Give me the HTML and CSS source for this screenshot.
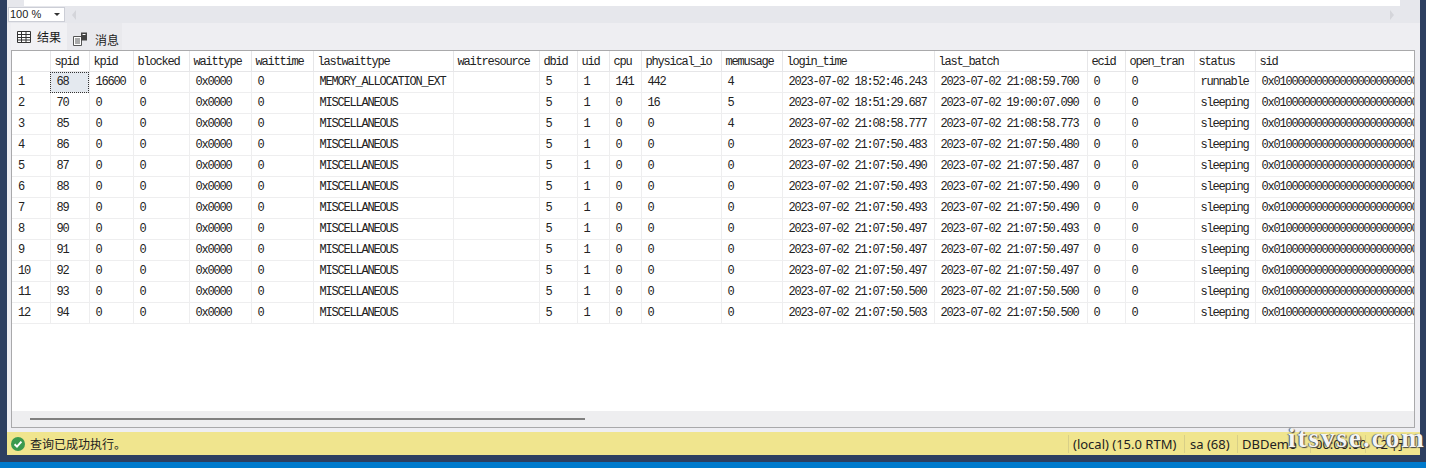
FILE: index.html
```html
<!DOCTYPE html>
<html lang="zh-CN">
<head>
  <meta charset="utf-8"/>
  <link rel="stylesheet" href="styles.css">
  <title>结果</title>
</head>
<body>
  <div class="window">
    <div class="panel">
      <div class="top-strip"><div class="top-white"></div></div>
      <div class="zoom-bar">
        <div class="zoom-select">100 %<span class="zoom-caret"></span></div>
        <span class="arrow-left"></span>
        <span class="arrow-right"></span>
      </div>
      <div class="tabs">
        <div class="tab tab-active">
          <svg width="14" height="12" viewBox="0 0 14 12" class="tab-icon"><path d="M.5.5h13v11H.5zM.5 3.5h13M.5 6.5h13M.5 9h13M4.5 .5v11M9 .5v11" fill="#fff" stroke="#333"/></svg>
          结果
        </div>
        <div class="tab tab-other">
          <svg width="15" height="14" viewBox="0 0 15 14" class="tab-icon"><path d="M.5 4.5h8v9h-8zM2 7h5M2 9h5M2 11h5" fill="#fff" stroke="#555"/><path d="M8 .5h6v8H8z" fill="#444"/><path d="M9.5 2.5h3" stroke="#fff"/></svg>
          消息
        </div>
      </div>
      <div class="grid-box">
        <div class="grid-scroll">
          <table class="grid">
            <colgroup>
              <col width="38"><col width="39"><col width="44"><col width="56"><col width="62"><col width="62"><col width="140"><col width="86"><col width="38"><col width="32"><col width="32"><col width="80"><col width="61"><col width="152"><col width="153"><col width="38"><col width="69"><col width="61"><col width="200">
            </colgroup>
            <thead>
              <tr><th></th><th>spid</th><th>kpid</th><th>blocked</th><th>waittype</th><th>waittime</th><th>lastwaittype</th><th>waitresource</th><th>dbid</th><th>uid</th><th>cpu</th><th>physical_io</th><th>memusage</th><th>login_time</th><th>last_batch</th><th>ecid</th><th>open_tran</th><th>status</th><th>sid</th></tr>
            </thead>
            <tbody>
              <tr><td>1</td><td class="cell-focus">68</td><td>16600</td><td>0</td><td>0x0000</td><td>0</td><td>MEMORY_ALLOCATION_EXT</td><td></td><td>5</td><td>1</td><td>141</td><td>442</td><td>4</td><td>2023-07-02 18:52:46.243</td><td>2023-07-02 21:08:59.700</td><td>0</td><td>0</td><td>runnable</td><td>0x0100000000000000000000000000</td></tr>
              <tr><td>2</td><td>70</td><td>0</td><td>0</td><td>0x0000</td><td>0</td><td>MISCELLANEOUS</td><td></td><td>5</td><td>1</td><td>0</td><td>16</td><td>5</td><td>2023-07-02 18:51:29.687</td><td>2023-07-02 19:00:07.090</td><td>0</td><td>0</td><td>sleeping</td><td>0x0100000000000000000000000000</td></tr>
              <tr><td>3</td><td>85</td><td>0</td><td>0</td><td>0x0000</td><td>0</td><td>MISCELLANEOUS</td><td></td><td>5</td><td>1</td><td>0</td><td>0</td><td>4</td><td>2023-07-02 21:08:58.777</td><td>2023-07-02 21:08:58.773</td><td>0</td><td>0</td><td>sleeping</td><td>0x0100000000000000000000000000</td></tr>
              <tr><td>4</td><td>86</td><td>0</td><td>0</td><td>0x0000</td><td>0</td><td>MISCELLANEOUS</td><td></td><td>5</td><td>1</td><td>0</td><td>0</td><td>0</td><td>2023-07-02 21:07:50.483</td><td>2023-07-02 21:07:50.480</td><td>0</td><td>0</td><td>sleeping</td><td>0x0100000000000000000000000000</td></tr>
              <tr><td>5</td><td>87</td><td>0</td><td>0</td><td>0x0000</td><td>0</td><td>MISCELLANEOUS</td><td></td><td>5</td><td>1</td><td>0</td><td>0</td><td>0</td><td>2023-07-02 21:07:50.490</td><td>2023-07-02 21:07:50.487</td><td>0</td><td>0</td><td>sleeping</td><td>0x0100000000000000000000000000</td></tr>
              <tr><td>6</td><td>88</td><td>0</td><td>0</td><td>0x0000</td><td>0</td><td>MISCELLANEOUS</td><td></td><td>5</td><td>1</td><td>0</td><td>0</td><td>0</td><td>2023-07-02 21:07:50.493</td><td>2023-07-02 21:07:50.490</td><td>0</td><td>0</td><td>sleeping</td><td>0x0100000000000000000000000000</td></tr>
              <tr><td>7</td><td>89</td><td>0</td><td>0</td><td>0x0000</td><td>0</td><td>MISCELLANEOUS</td><td></td><td>5</td><td>1</td><td>0</td><td>0</td><td>0</td><td>2023-07-02 21:07:50.493</td><td>2023-07-02 21:07:50.490</td><td>0</td><td>0</td><td>sleeping</td><td>0x0100000000000000000000000000</td></tr>
              <tr><td>8</td><td>90</td><td>0</td><td>0</td><td>0x0000</td><td>0</td><td>MISCELLANEOUS</td><td></td><td>5</td><td>1</td><td>0</td><td>0</td><td>0</td><td>2023-07-02 21:07:50.497</td><td>2023-07-02 21:07:50.493</td><td>0</td><td>0</td><td>sleeping</td><td>0x0100000000000000000000000000</td></tr>
              <tr><td>9</td><td>91</td><td>0</td><td>0</td><td>0x0000</td><td>0</td><td>MISCELLANEOUS</td><td></td><td>5</td><td>1</td><td>0</td><td>0</td><td>0</td><td>2023-07-02 21:07:50.497</td><td>2023-07-02 21:07:50.497</td><td>0</td><td>0</td><td>sleeping</td><td>0x0100000000000000000000000000</td></tr>
              <tr><td>10</td><td>92</td><td>0</td><td>0</td><td>0x0000</td><td>0</td><td>MISCELLANEOUS</td><td></td><td>5</td><td>1</td><td>0</td><td>0</td><td>0</td><td>2023-07-02 21:07:50.497</td><td>2023-07-02 21:07:50.497</td><td>0</td><td>0</td><td>sleeping</td><td>0x0100000000000000000000000000</td></tr>
              <tr><td>11</td><td>93</td><td>0</td><td>0</td><td>0x0000</td><td>0</td><td>MISCELLANEOUS</td><td></td><td>5</td><td>1</td><td>0</td><td>0</td><td>0</td><td>2023-07-02 21:07:50.500</td><td>2023-07-02 21:07:50.500</td><td>0</td><td>0</td><td>sleeping</td><td>0x0100000000000000000000000000</td></tr>
              <tr><td>12</td><td>94</td><td>0</td><td>0</td><td>0x0000</td><td>0</td><td>MISCELLANEOUS</td><td></td><td>5</td><td>1</td><td>0</td><td>0</td><td>0</td><td>2023-07-02 21:07:50.503</td><td>2023-07-02 21:07:50.500</td><td>0</td><td>0</td><td>sleeping</td><td>0x0100000000000000000000000000</td></tr>
            </tbody>
          </table>
        </div>
        <div class="hscroll"><div class="hscroll-thumb"></div></div>
      </div>
      <div class="status-bar">
        <svg width="14" height="14" viewBox="0 0 14 14" class="status-icon"><circle cx="7" cy="7" r="7" fill="#3a9a4e"/><path d="M3.6 7.2l2.4 2.4 4.4-5" fill="none" stroke="#fff" stroke-width="2"/></svg>
        <span class="status-msg">查询已成功执行。</span>
        <span class="status-cell cell-server">(local) (15.0 RTM)</span>
        <span class="status-cell cell-user">sa (68)</span>
        <span class="status-cell cell-db">DBDemo</span>
        <span class="status-cell cell-time">00:00:00</span>
        <span class="status-cell cell-rows">12 行</span>
      </div>
    </div>
    <div class="footer-blue"></div>
    <div class="watermark">itsvse.com</div>
  </div>
</body>
</html>
```

FILE: styles.css
```css
html, body {
  margin: 0;
  height: 100%;
  background: #fff;
  overflow: hidden;
}

.window {
  position: relative;
  width: 1426px;
  height: 468px;
  display: flex;
  flex-direction: column;
  background: #2d3f60;
  font-family: "Liberation Mono", monospace;
}

.panel {
  flex: 1;
  margin: 0 6px 7px 7px;
  display: flex;
  flex-direction: column;
  background: #eeeef2;
}

.top-strip {
  height: 6px;
  padding: 0 20px 0 17px;
  background: #e6e7ec;
}

.top-white {
  height: 6px;
  background: #fff;
}

.zoom-bar {
  height: 17px;
  background: #e6e7ec;
  display: flex;
  align-items: center;
  padding-left: 1px;
}

.zoom-select {
  width: 57px;
  height: 15px;
  box-sizing: border-box;
  border: 1px solid #ccced6;
  background: #fff;
  font: 11px/13px "Liberation Sans", sans-serif;
  color: #222;
  padding-left: 1px;
  position: relative;
}

.zoom-caret {
  position: absolute;
  right: 4px;
  top: 5px;
  border: 3px solid transparent;
  border-top: 3px solid #333;
  border-bottom: 0;
}

.arrow-left {
  margin-left: 7px;
  border: 5px solid transparent;
  border-right: 4px solid #d4d5da;
  border-left: 0;
}

.arrow-right {
  margin-left: auto;
  margin-right: 26px;
  border: 5px solid transparent;
  border-left: 4px solid #d4d5da;
  border-right: 0;
}

.tabs {
  height: 27px;
  display: flex;
  padding-left: 4px;
  font: 12px/27px "Noto Sans CJK SC", sans-serif;
  color: #1a1a1a;
}

.tab {
  display: flex;
  align-items: center;
  gap: 7px;
}

.tab-active {
  width: 50px;
  padding: 0 0 0 6px;
  height: 27px;
  background: #f1f1f4;
  gap: 6px;
}

.tab-other {
  width: 49px;
  padding: 5px 0 0 6px;
  height: 22px;
  background: #e9e9ed;
}

.grid-box {
  height: 378px;
  box-sizing: border-box;
  margin: 0 5px 0 4px;
  border: 1px solid #a9a9ab;
  display: flex;
  flex-direction: column;
  background: #fff;
}

.grid-scroll {
  flex: 1;
  overflow: hidden;
}

.grid {
  border-collapse: collapse;
  table-layout: fixed;
  width: 1443px;
  font-size: 12px;
  letter-spacing: -1.2px;
  color: #222;
}

.grid th {
  height: 19px;
  padding: 1px 0 0 4px;
  font-weight: normal;
  text-align: left;
  border-right: 1px solid #e6e6e8;
  border-bottom: 1px solid #e6e6e8;
  white-space: nowrap;
  overflow: hidden;
}

.grid td {
  height: 20px;
  padding: 0 0 0 6px;
  border-right: 1px solid #eeeeef;
  border-bottom: 1px solid #eeeeef;
  white-space: nowrap;
  overflow: hidden;
}

.grid td.cell-focus {
  background: #e4e9ef;
  outline: 1px dotted #333;
  outline-offset: -1px;
}

.hscroll {
  height: 16px;
  background: #eeeef0;
  display: flex;
  align-items: center;
  padding-left: 18px;
}

.hscroll-thumb {
  width: 555px;
  height: 2px;
  background: #808080;
}

.status-bar {
  height: 23px;
  margin-top: 4px;
  display: flex;
  align-items: center;
  background: #f0e58e;
  font: 13px/23px "Noto Sans", "Noto Sans CJK SC", sans-serif;
  color: #222;
}

.status-icon {
  margin-left: 4px;
}

.status-msg {
  margin-left: 5px;
  flex: 1;
  font: 12px/23px "Noto Sans CJK SC", sans-serif;
}

.status-cell {
  box-sizing: border-box;
  height: 18px;
  line-height: 18px;
  padding-left: 4px;
  border-left: 1px solid #d8cf88;
  white-space: nowrap;
}

.cell-server { width: 116px; }
.cell-user { width: 53px; padding-left: 5px; }
.cell-db { width: 73px; }
.cell-time { width: 55px; }
.cell-rows { width: 55px; padding-left: 7px; }

.footer-blue {
  height: 6px;
  background: #007acc;
}

.watermark {
  position: absolute;
  left: 1288px;
  top: 423px;
  font: bold 27px/30px "Liberation Serif", serif;
  letter-spacing: 2px;
  color: #f4f4f4;
  text-shadow: 1px 1px 1px #444, -1px 0 1px #555;
  white-space: nowrap;
}
```
